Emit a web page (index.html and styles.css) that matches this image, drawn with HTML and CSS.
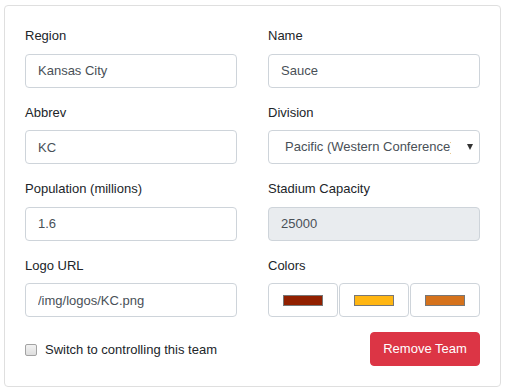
FILE: index.html
```html
<!DOCTYPE html>
<html lang="en">
<head>
    <meta charset="UTF-8">
    <meta name="viewport" content="width=device-width, initial-scale=1.0">
    <title>Team</title>
    <link rel="stylesheet" href="styles.css">
</head>
<body>

    <div class="card">
        <div class="row">
            <div class="form-group">
                <label>Region</label>
                <input class="form-control" type="text" value="Kansas City">
            </div>
            <div class="form-group">
                <label>Name</label>
                <input class="form-control" type="text" value="Sauce">
            </div>
            <div class="form-group">
                <label>Abbrev</label>
                <input class="form-control" type="text" value="KC">
            </div>
            <div class="form-group">
                <label>Division</label>
                <div class="select-wrap">
                    <select class="form-control">
                        <option>Pacific (Western Conference)</option>
                        <option>Central (Western Conference)</option>
                        <option>Atlantic (Eastern Conference)</option>
                    </select>
                </div>
            </div>
            <div class="form-group">
                <label>Population (millions)</label>
                <input class="form-control" type="text" value="1.6">
            </div>
            <div class="form-group">
                <label>Stadium Capacity</label>
                <input class="form-control" type="text" value="25000" disabled>
            </div>
            <div class="form-group">
                <label>Logo URL</label>
                <input class="form-control" type="text" value="/img/logos/KC.png">
            </div>
            <div class="form-group">
                <label>Colors</label>
                <div class="color-group">
                    <button class="color-btn" type="button"><span class="swatch" style="background-color: #912000;"></span></button>
                    <button class="color-btn" type="button"><span class="swatch" style="background-color: #ffb612;"></span></button>
                    <button class="color-btn" type="button"><span class="swatch" style="background-color: #d5721c;"></span></button>
                </div>
            </div>
        </div>

        <div class="card-footer">
            <label class="check">
                <input type="checkbox">
                Switch to controlling this team
            </label>
            <button class="btn-danger" type="button">Remove Team</button>
        </div>
    </div>

</body>
</html>
```

FILE: styles.css
```css
body {
    font-family: "Liberation Sans", Arial, Helvetica, sans-serif;
    font-size: 13px;
    line-height: 19.5px;
    color: #212529;
    background-color: #fff;
    margin: 0;
    padding: 5px 5px 0 4px;
}
.card {
    border: 1px solid #dfdfdf;
    border-radius: 4px;
    padding: 20px;
    width: 455px;
}
.row {
    display: grid;
    grid-template-columns: 1fr 1fr;
    column-gap: 31px;
}
.form-group {
    margin-bottom: 15px;
}
.form-group label {
    display: block;
    margin-bottom: 8px;
}
.form-control {
    display: block;
    box-sizing: border-box;
    width: 100%;
    height: 34px;
    padding: 6px 12px;
    font-family: inherit;
    font-size: 13px;
    line-height: 20px;
    color: #495057;
    background-color: #fff;
    border: 1px solid #ced4da;
    border-radius: 4px;
    margin: 0;
}
.form-control:disabled {
    background-color: #e9ecef;
}
.select-wrap {
    position: relative;
}
.select-wrap select {
    appearance: none;
    -webkit-appearance: none;
    padding-left: 16px;
    padding-right: 28px;
}
.select-wrap::after {
    content: "";
    position: absolute;
    right: 7px;
    top: 14px;
    border-left: 3px solid transparent;
    border-right: 3px solid transparent;
    border-top: 6px solid #333;
    pointer-events: none;
}
.color-group {
    display: flex;
    gap: 1px;
}
.color-btn {
    flex: 1;
    height: 34px;
    padding: 0;
    background-color: #fff;
    border: 1px solid #ced4da;
    border-radius: 4px;
    display: flex;
    align-items: center;
    justify-content: center;
}
.swatch {
    display: block;
    width: 38px;
    height: 9px;
    border: 1px solid #777;
}
.card-footer {
    display: flex;
    justify-content: space-between;
    align-items: center;
}
.check {
    display: flex;
    align-items: center;
    gap: 8px;
    padding-top: 2px;
}
.check input {
    appearance: none;
    -webkit-appearance: none;
    margin: 0;
    width: 12px;
    height: 12px;
    box-sizing: border-box;
    border: 1px solid #a3a3a3;
    border-radius: 2px;
    background: linear-gradient(#f2f2f2, #dedede);
}
.btn-danger {
    font-family: inherit;
    font-size: 13px;
    line-height: 20px;
    padding: 6px 12px;
    color: #fff;
    background-color: #dc3545;
    border: 1px solid #dc3545;
    border-radius: 4px;
    width: 110px;
}
```
